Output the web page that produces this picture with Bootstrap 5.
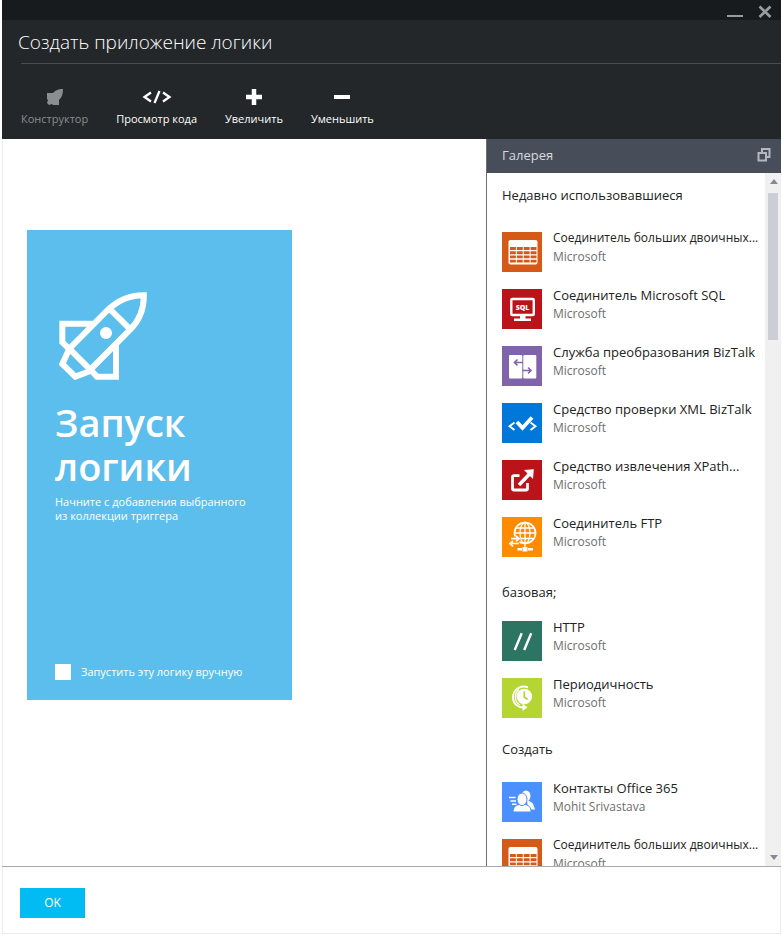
<!DOCTYPE html>
<html lang="ru">
<head>
<meta charset="utf-8">
<meta name="viewport" content="width=device-width, initial-scale=1">
<title>Создать приложение логики</title>
<link href="https://cdn.jsdelivr.net/npm/bootstrap@5.3.0/dist/css/bootstrap.min.css" rel="stylesheet">
<style>
  body { font-family: "Open Sans", "Noto Sans", sans-serif; font-size: 13px; line-height: 18px; color: #222; background: #fff; }
  .blade { padding: 0 1px 1px 2px; }
  .blade-top { background: #171b1d; height: 20px; padding-right: 8px; gap: 12px; }
  .plain { background: none; border: 0; padding: 0; color: inherit; display: block; }
  .blade-top .plain { color: #999c9e; line-height: 0; }
  .blade-head { background: #23272a; height: 119px; color: #fff; }
  .blade-head h1 { font-size: 19px; font-weight: 300; line-height: 24px; padding: 10px 16px 9px; margin: 0; }
  .rule { border-top: 1px solid #4a4e51; margin-left: 19px; }
  .tools { padding: 24px 19px 0; gap: 28px; font-size: 11px; line-height: 16px; }
  .tools .plain { display: flex; flex-direction: column; align-items: center; gap: 5px; color: #fff; }
  .tools .plain:disabled { color: #8b8d8e; }
  .edge { border-left: 1px solid #ececec; }
  .canvas { padding: 91px 24px 0; }
  .start { width: 265px; height: 470px; background: #5cbeec; color: #fff; padding: 62px 28px 20px; }
  .start .rocket { margin-left: 4px; }
  .start h2 { font-size: 38px; font-weight: 600; line-height: 44px; margin: 20px 0 7px; }
  .start p { font-size: 11px; line-height: 14px; margin: 0; }
  .start label { font-size: 11px; line-height: 16px; }
  .start .manual { gap: 10px; }
  .start input { appearance: none; width: 16px; height: 16px; background: #fff; margin: 0; }
  .start input:checked { box-shadow: inset 0 0 0 4px #fff; background: #1b87bd; }
  .gallery { width: 295px; border-left: 1px solid #6c6e70; }
  .gallery-head { background: #474e5a; height: 34px; color: #d8dadd; padding: 0 10px 2px 15px; }
  .gallery-head h2, .group h3 { font-size: 13px; font-weight: 400; line-height: 20px; margin: 0; }
  .gallery-head .plain { color: #b4b8be; line-height: 0; }
  .groups { padding-left: 15px; }
  .group h3 { padding: 12px 0 24px; }
  .group-base h3 { padding: 11px 0 16px; }
  .group-new h3 { padding: 7px 0 20px; }
  .entry { height: 57px; gap: 11px; color: #222; }
  .entry svg { margin-top: 3px; }
  .entry .long { font-size: 12px; }
  .entry small { font-size: 12px; line-height: 20px; color: #6e6e6e; }
  .track { width: 16px; background: #f0f0f0; }
  .track .plain { height: 20px; width: 15px; color: #86879a; line-height: 0; }
  .thumb { width: 10px; height: 147px; background: #cdced5; }
  .foot { border-top: 1px solid #aaa; }
  .foot-in { border: solid #ececec; border-width: 0 1px 1px; padding: 21px 17px 15px; }
  .ok { background: #00bcf2; color: #fff; border: 0; border-radius: 0; width: 65px; height: 30px; padding: 0; font-size: 12px; line-height: 30px; }
</style>
<script src="https://cdn.jsdelivr.net/npm/bootstrap@5.3.0/dist/js/bootstrap.bundle.min.js"></script>
</head>
<body>
<div class="blade d-flex flex-column vh-100">
  <header class="flex-shrink-0">
    <div class="blade-top d-flex justify-content-end">
      <button class="plain" type="button" aria-label="Свернуть"><svg width="20" height="20"><path d="M2 16H18" stroke="currentColor" stroke-width="2"/></svg></button>
      <button class="plain" type="button" aria-label="Закрыть"><svg width="16" height="20"><path d="M2.500 6.500 13.500 17M13.500 6.500 2.500 17" stroke="currentColor" stroke-width="2.700"/></svg></button>
    </div>
    <div class="blade-head">
      <h1>Создать приложение логики</h1>
      <div class="rule"></div>
      <div class="tools d-flex" role="toolbar">
        <button class="plain" type="button" disabled><svg width="18" height="18"><path d="M17 1C12 1 10 2 7 5H1V11L2 12 1 15 3 17 6 16 7 17H13V12C16 9 17 6 17 1Z" fill="currentColor"/></svg>Конструктор</button>
        <button class="plain" type="button"><svg width="30" height="18"><path d="M9 4.500 2.500 9 9 13.500M21 4.500 27.500 9 21 13.500M17.500 3 12.500 15" fill="none" stroke="currentColor" stroke-width="2.300"/></svg>Просмотр кода</button>
        <button class="plain" type="button"><svg width="18" height="18"><path d="M1 9H17M9 1V17" stroke="currentColor" stroke-width="4.500"/></svg>Увеличить</button>
        <button class="plain" type="button"><svg width="18" height="18"><path d="M1 9H17" stroke="currentColor" stroke-width="4"/></svg>Уменьшить</button>
      </div>
    </div>
  </header>

  <div class="edge d-flex flex-grow-1 overflow-hidden">
    <main class="canvas flex-grow-1">
      <section class="start d-flex flex-column">
        <svg class="rocket flex-shrink-0" width="88" height="88" viewBox="117 216 264 264" fill="none" stroke="#fff" stroke-width="18"><path d="M371.500 225.500C330 225 294 240 262 271L148 386 211 449 331 328C359 300 372 267 371.500 225.500ZM268 266 331 328M217 311H127V367L148 387M288 376V470H231L211 449M148 386 127 432 166 470 211 453"/><circle cx="258" cy="339" r="18" fill="#fff" stroke="none"/></svg>
        <h2>Запуск<br>логики</h2>
        <p>Начните с добавления выбранного<br>из коллекции триггера</p>
        <div class="manual d-flex align-items-center mt-auto"><input type="checkbox" id="manual"><label for="manual">Запустить эту логику вручную</label></div>
      </section>
    </main>

    <aside class="gallery d-flex flex-column flex-shrink-0">
      <div class="gallery-head d-flex align-items-center justify-content-between flex-shrink-0">
        <h2>Галерея</h2>
        <button class="plain" type="button" aria-label="Развернуть"><svg width="14" height="14" fill="none" stroke="currentColor" stroke-width="2"><path d="M5 4V1H12.500V9H9M1.500 5H9V12.500H1.500Z"/></svg></button>
      </div>
      <div class="d-flex flex-grow-1 overflow-hidden">
        <div class="groups flex-grow-1 overflow-hidden text-nowrap">
          <section class="group">
            <h3>Недавно использовавшиеся</h3>
            <a href="#" class="entry d-flex text-decoration-none">
              <svg class="flex-shrink-0" width="40" height="40"><path fill="#d65a17" d="M0 0H40V40H0Z"/><rect x="6.500" y="8" width="29" height="24.500" rx="2" fill="#fff"/><path d="M8 16.500H34.500M8 20.700H34.500M8 24.900H34.500M8 29.100H34.500" stroke="#d65a17" stroke-width="2.900" stroke-dasharray="5.900 .967"/></svg>
              <span class="d-flex flex-column"><span class="long">Соединитель больших двоичных...</span><small>Microsoft</small></span>
            </a>
            <a href="#" class="entry d-flex text-decoration-none">
              <svg class="flex-shrink-0" width="40" height="40"><path fill="#ba141a" d="M0 0H40V40H0Z"/><rect x="9.300" y="10" width="22.500" height="16" rx="1" fill="none" stroke="#fff" stroke-width="2.400"/><path fill="#fff" d="M18 27H23.500V29.500H29V32H12V29.500H18Z"/><text x="20.500" y="20.500" text-anchor="middle" font-size="7" font-weight="800" fill="#fff">SQL</text></svg>
              <span class="d-flex flex-column"><span>Соединитель Microsoft SQL</span><small>Microsoft</small></span>
            </a>
            <a href="#" class="entry d-flex text-decoration-none">
              <svg class="flex-shrink-0" width="40" height="40"><path fill="#8064ab" d="M0 0H40V40H0Z"/><rect x="7" y="9" width="13.300" height="23.500" rx="1" fill="#fff"/><rect x="21.300" y="9" width="13" height="23.500" rx="1" fill="#fff"/><path d="M21 16.500H12.500M15.500 13.500 12.500 16.500 15.500 19.500M20.500 24.500H29M26 21.500 29 24.500 26 27.500" fill="none" stroke="#8064ab" stroke-width="1.600"/></svg>
              <span class="d-flex flex-column"><span>Служба преобразования BizTalk</span><small>Microsoft</small></span>
            </a>
            <a href="#" class="entry d-flex text-decoration-none">
              <svg class="flex-shrink-0" width="40" height="40" fill="none" stroke="#fff"><path fill="#0078d9" stroke="none" d="M0 0H40V40H0Z"/><path d="M12.500 19.500 7.500 23.200 12.500 27M28.500 19.500 33.500 23.200 28.500 27" stroke-width="1.900"/><path d="M15 19 20.500 25 30 14.500" stroke-width="3.800"/></svg>
              <span class="d-flex flex-column"><span>Средство проверки XML BizTalk</span><small>Microsoft</small></span>
            </a>
            <a href="#" class="entry d-flex text-decoration-none">
              <svg class="flex-shrink-0" width="40" height="40" fill="none" stroke="#fff" stroke-width="3"><path fill="#ba141a" stroke="none" d="M0 0H40V40H0Z"/><path d="M17.500 15.700H12Q10.500 15.700 10.500 17V28.500Q10.500 30 12 30H24Q25.500 30 25.500 28.500V23" stroke-width="2.800"/><path d="M17 25 28 13.500" stroke-width="3.500"/><path fill="#fff" stroke="none" d="M22 10 31.800 9.200 31 19Z"/></svg>
              <span class="d-flex flex-column"><span>Средство извлечения XPath...</span><small>Microsoft</small></span>
            </a>
            <a href="#" class="entry d-flex text-decoration-none">
              <svg class="flex-shrink-0" width="40" height="40" fill="none" stroke="#fff" stroke-width="1.300"><path fill="#ff8c00" stroke="none" d="M0 0H40V40H0Z"/><circle cx="23" cy="16" r="10.500" stroke-width="1.700"/><ellipse cx="23" cy="16" rx="5" ry="10.500"/><path d="M23 5.500V31M14 11H32M12.500 16H33.500M15 21.500H31"/><path d="M6 19.500H15L18.500 21.700 16 29.500H6Z" fill="#ff8c00" stroke="none"/><path d="M9 21.700H16.500M14 19 17 21.700 14 24.500M17 26.500H8.500M11 24 8 26.500 11 29.500" stroke-width="1.700"/><path d="M15.500 32.300H20M26 32.300H31" stroke-width="2.600"/><path fill="#fff" stroke="none" d="M20.500 30H25.500V34.500H20.500Z"/></svg>
              <span class="d-flex flex-column"><span>Соединитель FTP</span><small>Microsoft</small></span>
            </a>
          </section>
          <section class="group group-base">
            <h3>базовая;</h3>
            <a href="#" class="entry d-flex text-decoration-none">
              <svg class="flex-shrink-0" width="40" height="40"><path fill="#2b7562" d="M0 0H40V40H0Z"/><path d="M19.700 12.300 12.700 29M29.200 12.300 22.200 29" stroke="#fff" stroke-width="2.400"/></svg>
              <span class="d-flex flex-column"><span>HTTP</span><small>Microsoft</small></span>
            </a>
            <a href="#" class="entry d-flex text-decoration-none">
              <svg class="flex-shrink-0" width="40" height="40" fill="none" stroke="#fff"><path fill="#b4d533" stroke="none" d="M0 0H40V40H0Z"/><circle cx="22.300" cy="18.500" r="7.800" fill="#fff" stroke="none"/><path d="M22.300 13.500V19L25.500 21.500" stroke="#b4d533" stroke-width="1.700"/><path d="M26 9.300C18 6.500 11 12 11 19.500C11 26 16 29.500 21 29.500" stroke-width="1.800"/><path d="M17 11.500C12 15 12 24 18 27" stroke-width="1.300"/><path d="M20.500 25.500 25.500 29.300 20.500 33Z" fill="#fff" stroke="none"/></svg>
              <span class="d-flex flex-column"><span>Периодичность</span><small>Microsoft</small></span>
            </a>
          </section>
          <section class="group group-new">
            <h3>Создать</h3>
            <a href="#" class="entry d-flex text-decoration-none">
              <svg class="flex-shrink-0" width="40" height="40"><path fill="#4a90ff" d="M0 0H40V40H0Z"/><ellipse cx="24" cy="14" rx="4.500" ry="5.500" fill="#fff"/><path d="M25 18 29 20C31 21 32 24 33 27.500H26Z" fill="#fff"/><path d="M11 30C11.500 25 13 23.500 17 22.500H23.500C27 23.500 29 25 29 30Z" fill="#fff" stroke="#4a90ff"/><ellipse cx="20" cy="17.300" rx="5" ry="6.300" fill="#fff" stroke="#4a90ff"/><path d="M7 15.500H13.500M8.500 19H14M10 22.300H14.500" stroke="#fff" stroke-width="1.400"/></svg>
              <span class="d-flex flex-column"><span>Контакты Office 365</span><small>Mohit Srivastava</small></span>
            </a>
            <a href="#" class="entry d-flex text-decoration-none">
              <svg class="flex-shrink-0" width="40" height="40"><path fill="#d65a17" d="M0 0H40V40H0Z"/><rect x="6.500" y="8" width="29" height="24.500" rx="2" fill="#fff"/><path d="M8 16.500H34.500M8 20.700H34.500M8 24.900H34.500M8 29.100H34.500" stroke="#d65a17" stroke-width="2.900" stroke-dasharray="5.900 .967"/></svg>
              <span class="d-flex flex-column"><span class="long">Соединитель больших двоичных...</span><small>Microsoft</small></span>
            </a>
          </section>
        </div>
        <div class="track d-flex flex-column align-items-center flex-shrink-0">
          <button class="plain" type="button" aria-label="Вверх"><svg width="15" height="20"><path d="M4 11 8 6 12 11Z" fill="currentColor"/></svg></button>
          <div class="thumb"></div>
          <button class="plain mt-auto" type="button" aria-label="Вниз"><svg width="15" height="20"><path d="M4 9 8 14 12 9Z" fill="currentColor"/></svg></button>
        </div>
      </div>
    </aside>
  </div>

  <footer class="foot flex-shrink-0"><div class="foot-in"><button class="ok btn" type="button">OK</button></div></footer>
</div>
</body>
</html>
